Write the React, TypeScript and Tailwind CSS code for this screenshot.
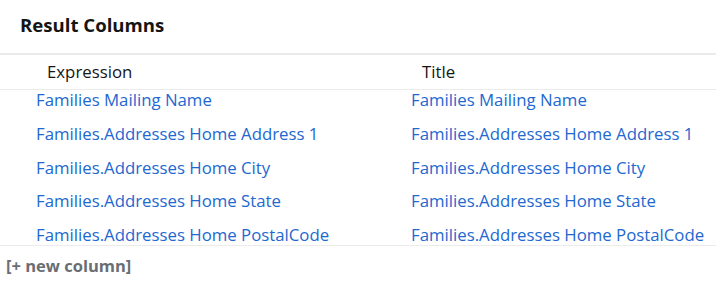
import React from 'react';

const rows = [
  'Families Mailing Name',
  'Families.Addresses Home Address 1',
  'Families.Addresses Home City',
  'Families.Addresses Home State',
  'Families.Addresses Home PostalCode',
];

const App: React.FC = () => {
  return (
    <div
      className="flex h-[282px] w-[716px] flex-col bg-white text-[#151515]"
      style={{ fontFamily: '"Open Sans", "Liberation Sans", sans-serif' }}
    >
      <div className="flex h-[55px] items-center border-b-2 border-[#ebebeb] pb-1 pl-5">
        <h2 className="text-[18.6px] font-bold">Result Columns</h2>
      </div>

      <div className="flex h-[35px] items-center border-b border-[#ebebeb] text-[16.8px]">
        <div className="w-[375px] pl-[47px]">Expression</div>
        <div className="flex-1 pl-[47px]">Title</div>
      </div>

      <div className="flex flex-col gap-[13.75px] border-b border-[#ebebeb] text-[16.8px] leading-5 text-[#2268d1]">
        {rows.map((name) => (
          <div key={name} className="flex">
            <div className="w-[375px] whitespace-nowrap pl-9">{name}</div>
            <div className="flex-1 whitespace-nowrap pl-9">{name}</div>
          </div>
        ))}
      </div>

      <div className="flex flex-1 items-center pl-1.5 pt-1">
        <button className="text-[16.5px] font-bold text-[#6a6e73]">[+ new column]</button>
      </div>
    </div>
  );
};

export default App;
